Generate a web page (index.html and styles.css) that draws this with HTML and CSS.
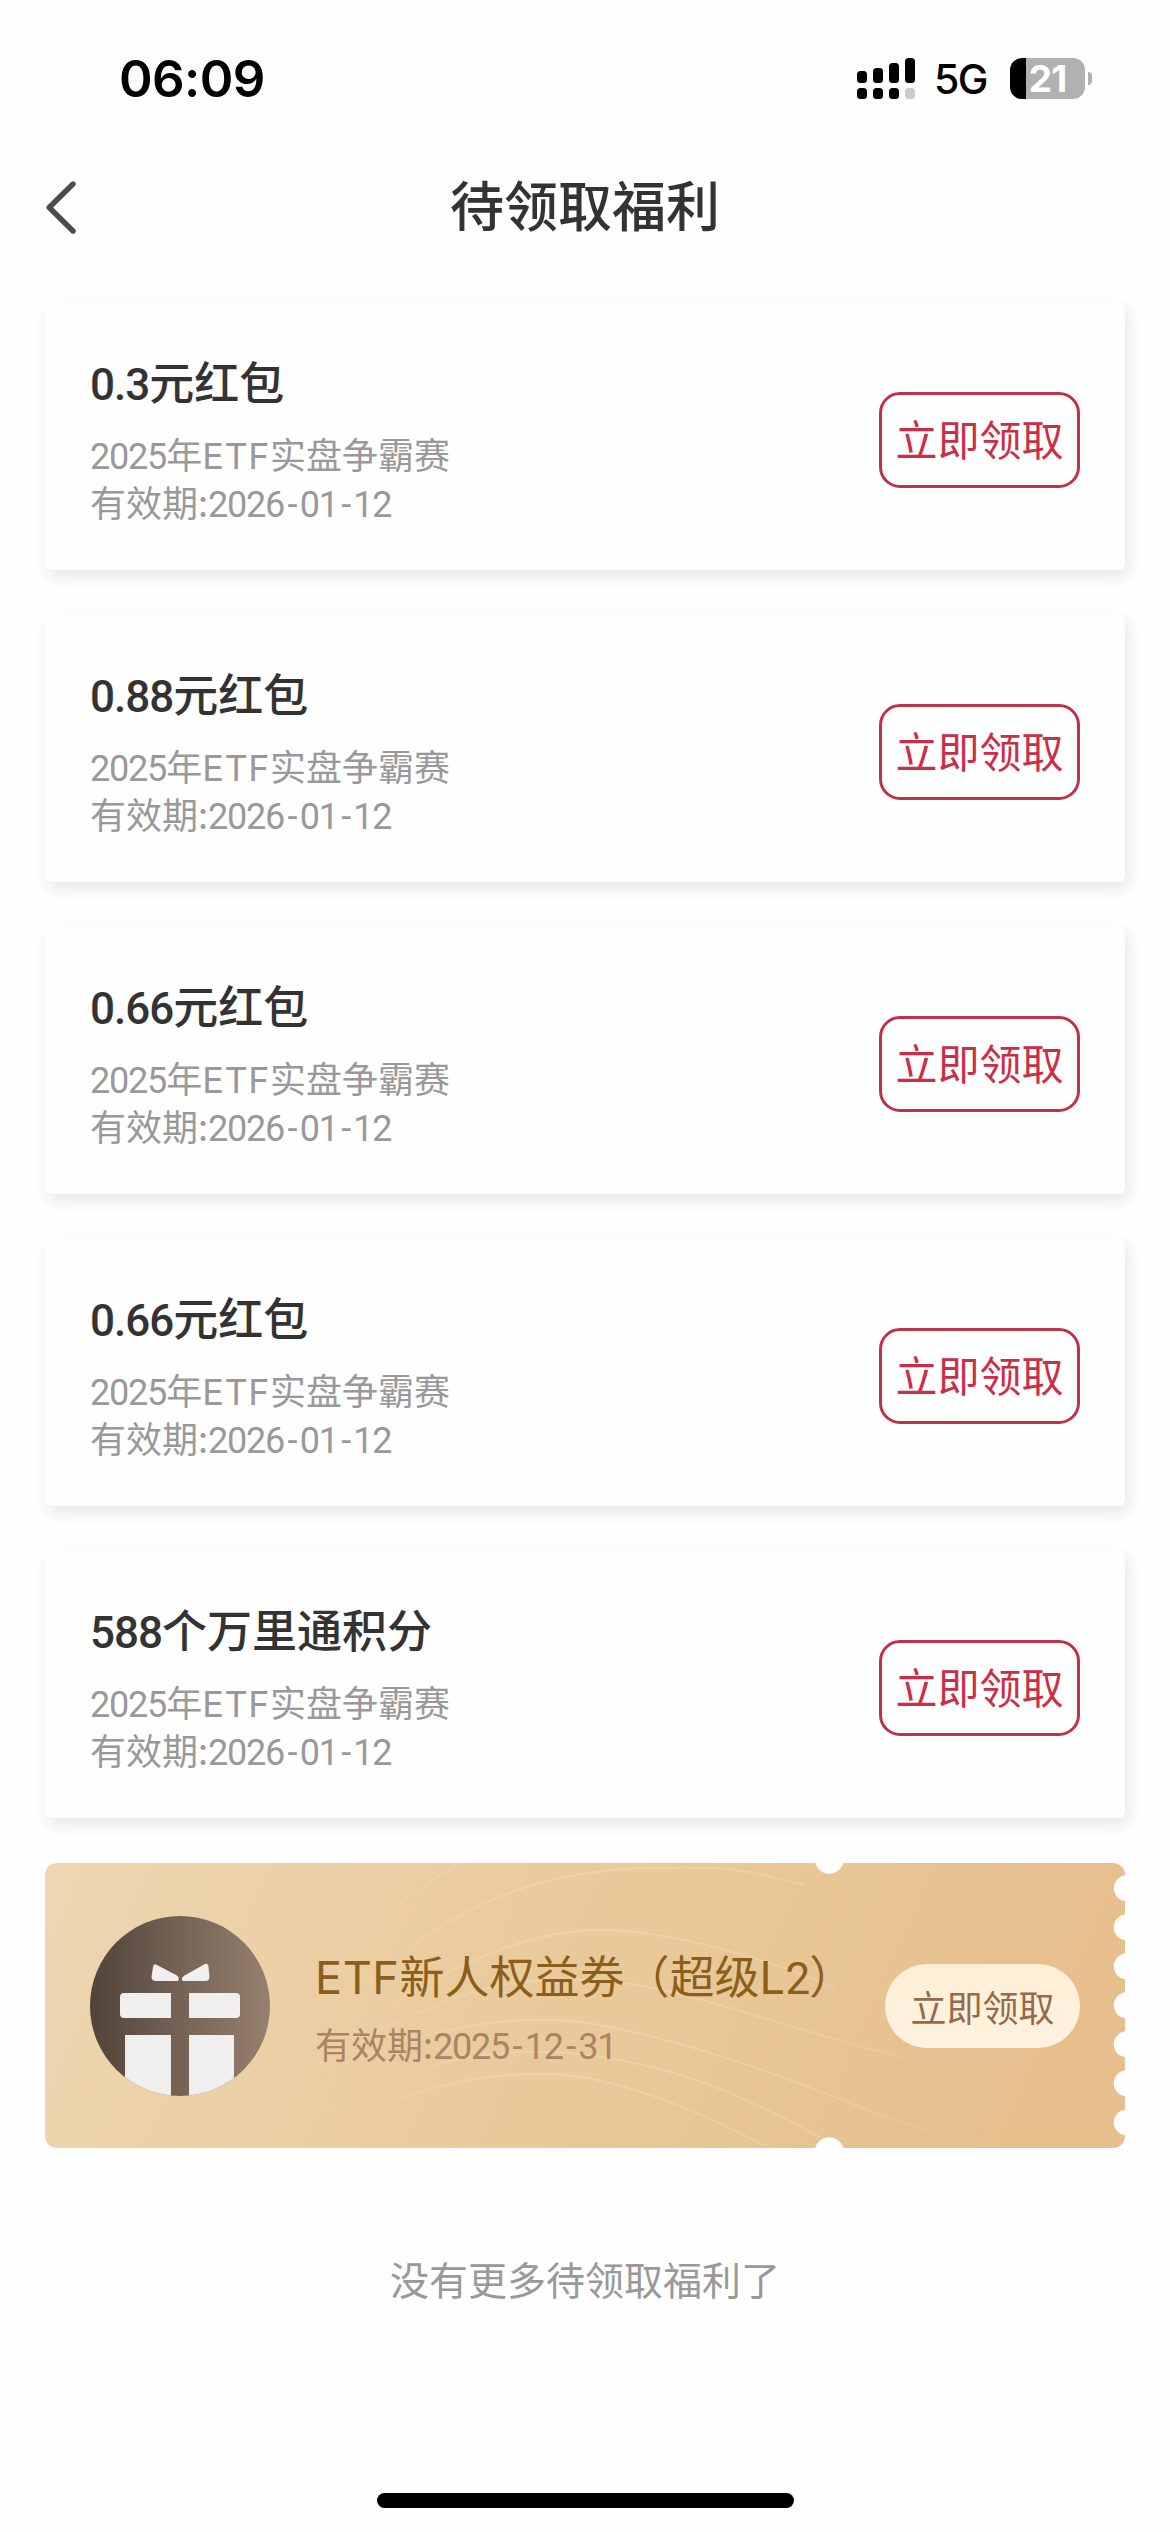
FILE: index.html
```html
<!DOCTYPE html>
<html lang="zh-CN">
<head>
<meta charset="utf-8">
<title>待领取福利</title>
<link rel="stylesheet" href="styles.css">
</head>
<body>
<div class="status-bar">
  <div class="clock">06:09</div>
  <div class="status-icons">
    <svg class="signal" width="58" height="41" viewBox="0 0 58 41">
      <rect x="0" y="13" width="10" height="12" rx="3.5"/>
      <rect x="16" y="10" width="10" height="15" rx="3.5"/>
      <rect x="32" y="5" width="10" height="20" rx="3.5"/>
      <rect x="48" y="0" width="10" height="25" rx="3.5"/>
      <rect x="0" y="30" width="10" height="11" rx="3.5"/>
      <rect x="16" y="30" width="10" height="11" rx="3.5"/>
      <rect x="32" y="30" width="10" height="11" rx="3.5"/>
      <rect x="48" y="30" width="10" height="11" rx="3.5" fill="#cbcbcb"/>
    </svg>
    <span class="network">5G</span>
    <div class="battery"><div class="battery-body">21</div><div class="battery-cap"></div></div>
  </div>
</div>
<header class="nav">
  <svg class="back" width="30" height="53" viewBox="0 0 30 53"><path d="M27 3 3.2 26.5 27 50" fill="none" stroke="#4c4c4c" stroke-width="5.4" stroke-linecap="round" stroke-linejoin="round"/></svg>
  <h1>待领取福利</h1>
</header>
<main class="list">
  <section class="card">
    <div class="info">
      <h2><span class="num">0.3</span>元红包</h2>
      <p><span class="num">2025</span>年<span class="lat">ETF</span>实盘争霸赛</p>
      <p>有效期:<span class="num">2026<b>-</b>01<b>-</b>12</span></p>
    </div>
    <button class="claim">立即领取</button>
  </section>
  <section class="card">
    <div class="info">
      <h2><span class="num">0.88</span>元红包</h2>
      <p><span class="num">2025</span>年<span class="lat">ETF</span>实盘争霸赛</p>
      <p>有效期:<span class="num">2026<b>-</b>01<b>-</b>12</span></p>
    </div>
    <button class="claim">立即领取</button>
  </section>
  <section class="card">
    <div class="info">
      <h2><span class="num">0.66</span>元红包</h2>
      <p><span class="num">2025</span>年<span class="lat">ETF</span>实盘争霸赛</p>
      <p>有效期:<span class="num">2026<b>-</b>01<b>-</b>12</span></p>
    </div>
    <button class="claim">立即领取</button>
  </section>
  <section class="card">
    <div class="info">
      <h2><span class="num">0.66</span>元红包</h2>
      <p><span class="num">2025</span>年<span class="lat">ETF</span>实盘争霸赛</p>
      <p>有效期:<span class="num">2026<b>-</b>01<b>-</b>12</span></p>
    </div>
    <button class="claim">立即领取</button>
  </section>
  <section class="card">
    <div class="info">
      <h2><span class="num">588</span>个万里通积分</h2>
      <p><span class="num">2025</span>年<span class="lat">ETF</span>实盘争霸赛</p>
      <p>有效期:<span class="num">2026<b>-</b>01<b>-</b>12</span></p>
    </div>
    <button class="claim">立即领取</button>
  </section>
  <section class="ticket">
    <svg class="ticket-bg" width="1080" height="285" viewBox="0 0 1080 285">
      <defs>
        <linearGradient id="gold" x1="0" y1="0" x2="1" y2=".12">
          <stop offset="0" stop-color="#eed6b2"/><stop offset=".45" stop-color="#eacb9d"/><stop offset="1" stop-color="#e6bf8d"/>
        </linearGradient>
        <linearGradient id="fade" gradientUnits="userSpaceOnUse" x1="220" y1="0" x2="960" y2="0">
          <stop offset="0" stop-color="#f6e2c2" stop-opacity="0"/><stop offset=".4" stop-color="#f6e2c2" stop-opacity=".38"/><stop offset=".7" stop-color="#f6e2c2" stop-opacity=".32"/><stop offset="1" stop-color="#f6e2c2" stop-opacity="0"/>
        </linearGradient>
      </defs>
      <rect width="1080" height="285" rx="12" fill="url(#gold)"/>
      <g fill="none" stroke="url(#fade)" stroke-width="2">
        <path d="M260 85Q300 30 350 0"/>
        <path d="M270 130Q335 44 415 0"/>
        <path d="M320 124C400 45 490 8 600 5S700 10 760 22"/>
        <path d="M300 175C400 100 490 65 560 67S720 95 790 125"/>
        <path d="M330 170C430 120 480 112 560 118S720 160 860 195"/>
        <path d="M240 230C360 165 450 155 510 157S680 190 805 240S900 262 960 275"/>
        <path d="M260 260C380 185 480 180 568 196S700 235 775 274"/>
        <path d="M285 271C380 215 450 210 505 211S640 240 722 284"/>
      </g>
      <g fill="#fefefe">
        <circle cx="784.3" cy="-3.7" r="14.5"/><circle cx="784.3" cy="288.7" r="14.5"/>
        <circle cx="1082" cy="25.3" r="13.2"/><circle cx="1082" cy="64.3" r="13.2"/><circle cx="1082" cy="103.3" r="13.2"/><circle cx="1082" cy="142.3" r="13.2"/><circle cx="1082" cy="181.3" r="13.2"/><circle cx="1082" cy="220.3" r="13.2"/><circle cx="1082" cy="259.5" r="13.2"/>
      </g>
    </svg>
    <svg class="gift" width="180" height="180" viewBox="0 0 180 180">
      <defs>
        <linearGradient id="brown" x1="0" y1="0" x2="1" y2="0"><stop offset="0" stop-color="#51433a"/><stop offset=".45" stop-color="#716053"/><stop offset="1" stop-color="#96806f"/></linearGradient>
        <clipPath id="disc"><circle cx="90" cy="90" r="90"/></clipPath>
      </defs>
      <g clip-path="url(#disc)">
        <rect width="180" height="180" fill="url(#brown)"/>
        <g fill="#f1efee">
          <path d="M66 48.500 87 59.500Q90 62 88 65H66Q61.500 65 61.500 61L63 51Q63.500 47.500 66 48.500Z"/>
          <path d="M115 48 94.500 59.500Q90.500 62 92.500 65H115Q119.500 65 119.500 61L118.500 50.500Q118 47 115 48Z"/>
          <path d="M34 77H81V102H34Q30 102 30 98V81Q30 77 34 77Z"/>
          <path d="M99 77H146Q150 77 150 81V98Q150 102 146 102H99Z"/>
          <rect x="35" y="119" width="46" height="61"/><rect x="99" y="119" width="45" height="61"/>
        </g>
      </g>
    </svg>
    <div class="ticket-info">
      <h2><span class="lat">ETF</span>新人权益券（超级<span class="lat">L</span><span class="num">2</span>）</h2>
      <p>有效期:<span class="num">2025<b>-</b>12<b>-</b>31</span></p>
    </div>
    <button class="pill">立即领取</button>
  </section>
</main>
<p class="end">没有更多待领取福利了</p>
<div class="home-bar"></div>
</body>
</html>
```
FILE: styles.css
```css
* { box-sizing: border-box; margin: 0; padding: 0; }
body {
  width: 1170px; height: 2532px; overflow: hidden;
  display: flex; flex-direction: column; align-items: center;
  background: #fefefe; color: #333;
  font-family: "Noto Sans CJK SC", sans-serif;
}
h1, h2, p { white-space: nowrap; }
h2 { font-size: 45px; font-weight: 500; line-height: 60px; }
p { font-size: 36px; line-height: 48px; color: #999; }
button { border: 0; font-family: inherit; }
.num { font-family: Roboto, sans-serif; line-height: 0; letter-spacing: -1.2px; }
h2 .num { font-size: 44px; letter-spacing: -1px; }
.num b { font-weight: inherit; padding: 0 3.4px; }
.lat { font-family: Inter, sans-serif; line-height: 0; letter-spacing: .6px; }

.status-bar {
  width: 100%; height: 156px; padding: 0 78px 0 119px;
  display: flex; align-items: center; justify-content: space-between;
  font-family: Inter, sans-serif; color: #000;
}
.clock { font-size: 51px; font-weight: 600; letter-spacing: -.6px; }
.status-icons { display: flex; align-items: center; }
.network { width: 56px; margin: 3px 20px 0 19px; font-size: 41px; font-weight: 500; letter-spacing: -1.5px; line-height: 1; }
.battery { display: flex; align-items: center; gap: 3px; }
.battery-body {
  width: 75px; height: 41px; border-radius: 12px; line-height: 41px; text-align: center;
  background: linear-gradient(90deg, #000 16px, #b1b1b1 16px);
  color: #fff; font-size: 37px; font-weight: 700; letter-spacing: -1px;
}
.battery-cap { width: 4px; height: 13px; border-radius: 0 5px 5px 0; background: #b1b1b1; }

.nav {
  width: 100%; height: 102px; padding: 0 46px;
  display: grid; grid-template-columns: 30px 1fr 30px; align-items: center;
}
.nav h1 { text-align: center; font-size: 54px; font-weight: 500; line-height: 80px; padding-bottom: 6px; }

.list { width: 1080px; margin-top: 45px; display: flex; flex-direction: column; gap: 45px; }
.card {
  height: 267px; padding: 0 45px; border-radius: 6px; background: #fefefe;
  box-shadow: 3px 6px 15px rgba(0, 0, 0, .1);
  display: flex; align-items: center; justify-content: space-between;
}
.info { padding-top: 3px; }
.info h2 { margin-bottom: 18px; }
.claim {
  width: 201px; height: 96px; margin-top: 6px; padding-bottom: 4px;
  border: 3px solid #c0314a; border-radius: 21px; background: none;
  color: #cb2f48; font-size: 42px; line-height: 86px;
}

.ticket {
  position: relative; height: 285px; padding: 0 45px;
  display: flex; align-items: center;
}
.ticket-bg { position: absolute; inset: 0; }
.gift, .ticket-info, .pill { position: relative; }
.gift { margin-top: 1px; flex: none; }
.ticket-info { flex: 1; margin-left: 45px; }
.ticket-info h2 { font-weight: 400; color: #8b5e1b; margin-bottom: 14px; }
.ticket-info p { color: #aa8463; }
.pill {
  width: 195px; height: 84px; border-radius: 42px;
  background: linear-gradient(#ffeed6, #fff3df);
  color: #97694c; font-size: 36px; line-height: 84px;
}

.end { margin-top: 102px; font-size: 39px; line-height: 56px; }
.home-bar { width: 417px; height: 15px; margin: auto 0 24px; border-radius: 8px; background: #000; }
```
